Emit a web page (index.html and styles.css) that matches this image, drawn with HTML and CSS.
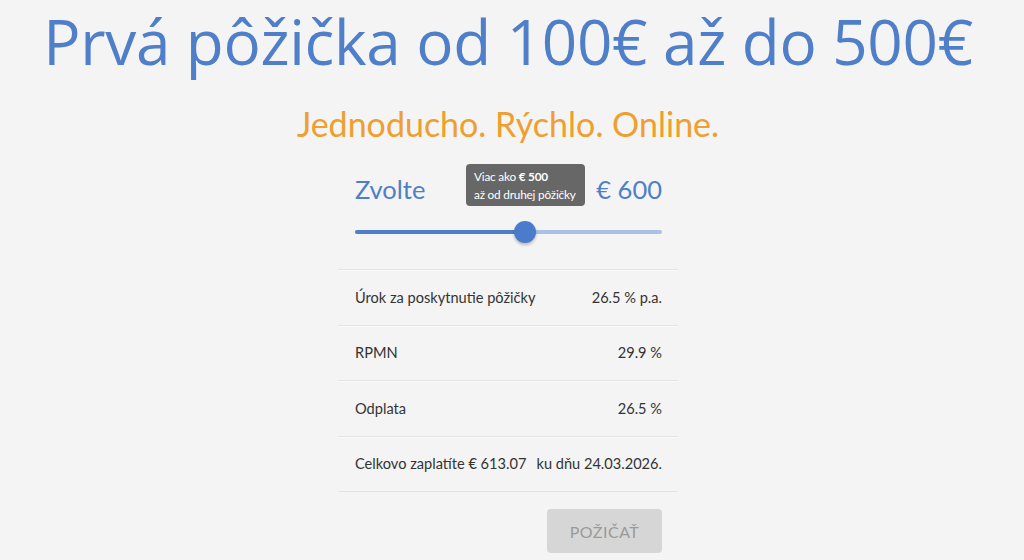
FILE: index.html
```html
<!DOCTYPE html>
<html lang="sk">
<head>
<meta charset="utf-8">
<link rel="stylesheet" href="styles.css">
</head>
<body>
<div class="page">
  <h1 class="title">Prvá pôžička od 100€ až do 500€</h1>
  <p class="subtitle">Jednoducho. Rýchlo. Online.</p>
  <div class="panel">
    <div class="pick">
      <span class="pick-label">Zvolte</span>
      <span class="pick-value">€ 600</span>
      <div class="tip">Viac ako <b>€ 500</b><br>až od druhej pôžičky</div>
    </div>
    <div class="slider">
      <div class="track"><div class="fill" style="width:55.4%"></div></div>
      <div class="thumb" style="left:55.4%"></div>
    </div>
    <div class="rows">
      <div class="row"><span>Úrok za poskytnutie pôžičky</span><span>26.5 % p.a.</span></div>
      <div class="row"><span>RPMN</span><span>29.9 %</span></div>
      <div class="row"><span>Odplata</span><span>26.5 %</span></div>
      <div class="row"><span>Celkovo zaplatíte € 613.07</span><span>ku dňu 24.03.2026.</span></div>
    </div>
    <div class="actions">
      <button class="btn" disabled>POŽIČAŤ</button>
    </div>
  </div>
</div>
</body>
</html>
```
FILE: styles.css
```css
html, body {
  margin: 0;
  padding: 0;
  background: #f4f4f4;
}
.page {
  width: 1016px;
  font-family: Lato, "Open Sans", sans-serif;
  text-align: center;
}
.title {
  margin: 0;
  padding-top: 0;
  font-family: "Open Sans", "Noto Sans", sans-serif;
  font-weight: 400;
  font-size: 62px;
  line-height: 82px;
  color: #4f7fc9;
  letter-spacing: -0.3px;
}
.subtitle {
  margin: 22px 0 0;
  font-size: 34px;
  line-height: 40px;
  color: #ee9f2e;
}
.panel {
  width: 340px;
  margin: 19px auto 0;
  text-align: left;
}
.pick {
  position: relative;
  display: flex;
  justify-content: space-between;
  align-items: center;
  padding: 0 16px 0 17px;
  height: 52px;
  font-size: 25.5px;
  color: #4f7fc9;
}
.tip {
  position: absolute;
  left: 128px;
  top: 1px;
  width: 119px;
  height: 42px;
  box-sizing: border-box;
  padding: 4px 0 0 8px;
  background: #676767;
  border-radius: 4px;
  color: #fff;
  font-size: 11.8px;
  line-height: 17.5px;
  letter-spacing: -0.2px;
}
.slider {
  position: relative;
  margin: 6px 16px 0 17px;
  height: 22px;
  display: flex;
  align-items: center;
}
.track {
  width: 100%;
  height: 4px;
  border-radius: 2px;
  background: #a9c0e7;
}
.fill {
  height: 100%;
  border-radius: 2px;
  background: #4f7fc9;
}
.thumb {
  position: absolute;
  top: 0;
  width: 22px;
  height: 22px;
  margin-left: -11px;
  border-radius: 50%;
  background: #4a7ccb;
  box-shadow: 0 2px 3px rgba(0,0,0,0.25);
}
.rows {
  margin-top: 26px;
}
.row {
  display: flex;
  justify-content: space-between;
  align-items: center;
  height: 54.5px;
  padding: 0 16px 0 17px;
  border-top: 1px solid #e3e3e3;
  box-shadow: inset 0 1px 0 #fbfbfb;
  font-size: 14.6px;
  color: #333;
  white-space: nowrap;
}
.row span {
  flex-shrink: 0;
}
.row:last-child {
  border-bottom: 1px solid #e3e3e3;
}
.actions {
  display: flex;
  justify-content: flex-end;
  padding: 17px 16px 0 0;
}
.btn {
  width: 115px;
  height: 44px;
  border: none;
  border-radius: 4px;
  background: #d6d6d6;
  color: #9a9a9a;
  font-family: Lato, sans-serif;
  font-size: 16px;
  letter-spacing: 0.5px;
}
```
